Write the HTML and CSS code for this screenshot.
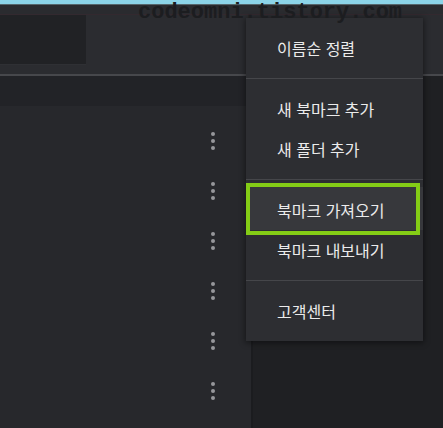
FILE: index.html
```html
<!DOCTYPE html>
<html lang="ko">
<head>
<meta charset="utf-8">
<link rel="stylesheet" href="styles.css">
</head>
<body>
<div class="app">
  <div class="topstrip"></div>
  <div class="titlebar"></div>
  <div class="toolbar"><div class="search"></div></div>
  <div class="main">
    <div class="listcol">
      <div class="listhead"></div>
      <div class="list">
        <div class="row"><span class="kebab"><i></i><i></i><i></i></span></div>
        <div class="row"><span class="kebab"><i></i><i></i><i></i></span></div>
        <div class="row"><span class="kebab"><i></i><i></i><i></i></span></div>
        <div class="row"><span class="kebab"><i></i><i></i><i></i></span></div>
        <div class="row"><span class="kebab"><i></i><i></i><i></i></span></div>
        <div class="row"><span class="kebab"><i></i><i></i><i></i></span></div>
      </div>
    </div>
    <div class="divider"></div>
    <div class="side"></div>
  </div>
</div>

<div class="menu">
  <div class="group">
    <div class="item">이름순 정렬</div>
  </div>
  <div class="sep"></div>
  <div class="group">
    <div class="item">새 북마크 추가</div>
    <div class="item">새 폴더 추가</div>
  </div>
  <div class="sep"></div>
  <div class="group">
    <div class="item hover">북마크 가져오기</div>
    <div class="item">북마크 내보내기</div>
  </div>
  <div class="sep"></div>
  <div class="group">
    <div class="item">고객센터</div>
  </div>
</div>
<div class="highlight"></div>
<div class="watermark">codeomni.tistory.com</div>
</body>
</html>
```

FILE: styles.css
```css
* { box-sizing: border-box; }
html, body { margin: 0; padding: 0; }
body {
  width: 443px;
  height: 428px;
  overflow: hidden;
  background: #1f2023;
  font-family: "Noto Sans CJK KR", "Noto Sans", sans-serif;
  position: relative;
}
.app {
  display: flex;
  flex-direction: column;
  height: 428px;
}
.topstrip {
  height: 5px;
  background: #8cd4e8;
  border-bottom: 1px solid #56666c;
}
.titlebar {
  height: 10px;
  background: #2a2b2f;
  border-bottom: 1px solid #33292f;
}
.toolbar {
  height: 61px;
  background: #2b2c30;
  border-bottom: 2px solid #47484c;
}
.search {
  width: 86px;
  height: 50px;
  background: #212225;
  border-bottom: 1px solid #2f3034;
}
.main {
  flex: 1;
  display: flex;
}
.listcol {
  width: 251px;
  display: flex;
  flex-direction: column;
}
.listhead {
  height: 30px;
  background: #222327;
}
.list {
  flex: 1;
  background: #27282c;
  padding-top: 10px;
}
.row {
  height: 50px;
  display: flex;
  align-items: center;
  justify-content: flex-end;
  padding-right: 36px;
}
.kebab {
  display: flex;
  flex-direction: column;
  gap: 3px;
}
.kebab i {
  display: block;
  width: 4px;
  height: 4px;
  border-radius: 50%;
  background: #96979b;
}
.divider {
  width: 2px;
  background: #1b1c1f;
}
.side {
  flex: 1;
  background: #1f2023;
}
.menu {
  position: absolute;
  left: 246px;
  top: 18px;
  width: 177px;
  background: #2d2e32;
  box-shadow: 0 1px 6px 1px rgba(0,0,0,0.45);
}
.group {
  padding: 10px 0;
}
.sep {
  height: 1px;
  background: #45464a;
}
.item {
  height: 40px;
  display: flex;
  align-items: center;
  padding-left: 31px;
  font-size: 16px;
  color: #ebebeb;
  white-space: nowrap;
}
.item.hover {
  background: #37383c;
  box-shadow: 0 -3px 0 #37383c;
}
.highlight {
  position: absolute;
  left: 246px;
  top: 183px;
  width: 174px;
  height: 52px;
  border: 4px solid #84cc16;
}
.watermark {
  position: absolute;
  left: 138px;
  top: 1px;
  font-family: "Liberation Mono", monospace;
  font-weight: bold;
  font-size: 22px;
  line-height: 24px;
  color: #1c1d20;
  white-space: nowrap;
}
```
